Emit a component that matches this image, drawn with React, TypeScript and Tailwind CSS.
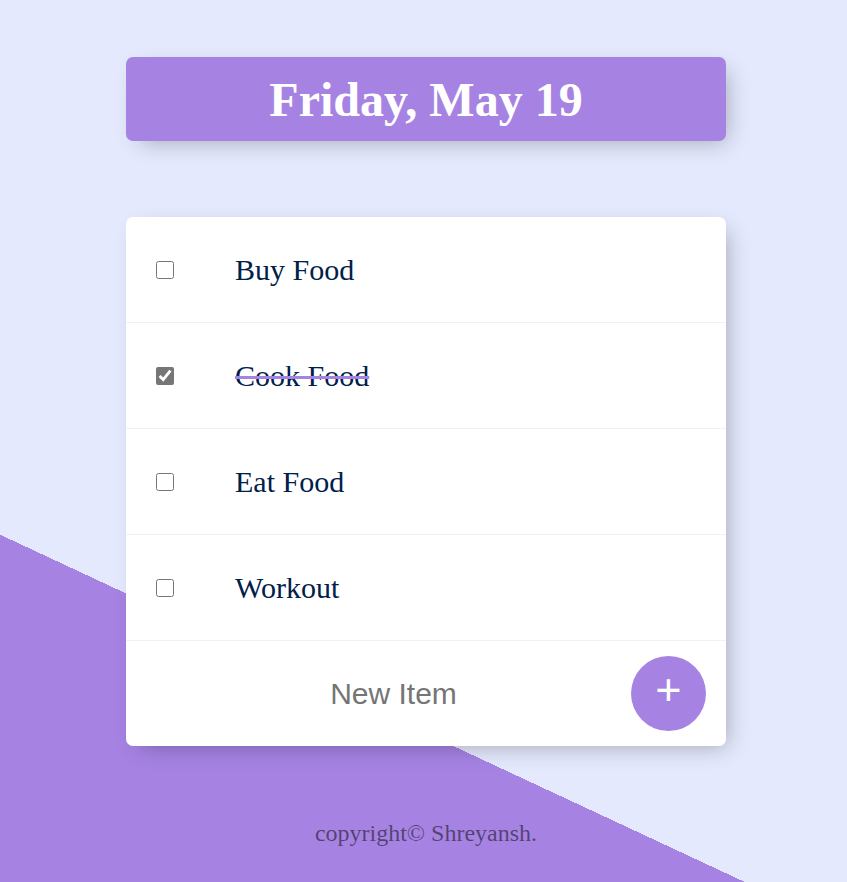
import { useState } from 'react';

const initialItems = [
  { name: 'Buy Food', done: false },
  { name: 'Cook Food', done: true },
  { name: 'Eat Food', done: false },
  { name: 'Workout', done: false },
];

export default function App() {
  const [items, setItems] = useState(initialItems);

  const toggle = (idx: number) => {
    setItems(prev => prev.map((it, i) => (i === idx ? { ...it, done: !it.done } : it)));
  };

  return (
    <div className="h-[882px] w-full overflow-hidden bg-[#E4E9FD] bg-[linear-gradient(25deg,#A683E3_27.2%,#E4E9FD_27.2%)] font-['Liberation_Serif',serif]">
      <div className="flex flex-col items-center pt-[57px] pl-[5px]">
        {/* Heading */}
        <div className="w-[600px] h-[84px] flex items-center justify-center bg-[#A683E3] rounded-[7px] shadow-[7px_7px_22px_-7px_rgba(0,0,0,0.3)]">
          <h1 className="text-white text-[48px] font-bold leading-none pt-[2px]">Friday, May 19</h1>
        </div>

        {/* List */}
        <div className="mt-[76px] w-[600px] bg-white rounded-[7px] shadow-[7px_7px_22px_-7px_rgba(0,0,0,0.3)]">
          {items.map((item, idx) => (
            <div key={item.name} className="h-[106px] flex items-center pl-[30px] border-b border-[#F1F1F1]">
              <input
                type="checkbox"
                checked={item.done}
                onChange={() => toggle(idx)}
                className="m-0 w-[18px] h-[18px] accent-[#767676]"
              />
              <p
                className={`ml-[61px] text-[30px] text-[#00204a] ${
                  item.done ? 'line-through decoration-[#A683E3] decoration-[3px]' : ''
                }`}
              >
                {item.name}
              </p>
            </div>
          ))}

          {/* New item form */}
          <div className="h-[105px] flex items-center pl-[30px]">
            <input
              type="text"
              placeholder="New Item"
              className="w-[469px] h-[90px] pl-[6px] text-center bg-transparent outline-none text-[30px] font-['Liberation_Sans',sans-serif] placeholder:text-[#757575]"
            />
            <button className="ml-[6px] w-[75px] h-[75px] rounded-full bg-[#A683E3] text-white text-[45px] leading-none pb-[9px] font-['Liberation_Sans',sans-serif] flex items-center justify-center">
              +
            </button>
          </div>
        </div>

        {/* Footer */}
        <footer className="mt-[69px] text-[24px] text-black/50 text-center">copyright© Shreyansh.</footer>
      </div>
    </div>
  );
}
